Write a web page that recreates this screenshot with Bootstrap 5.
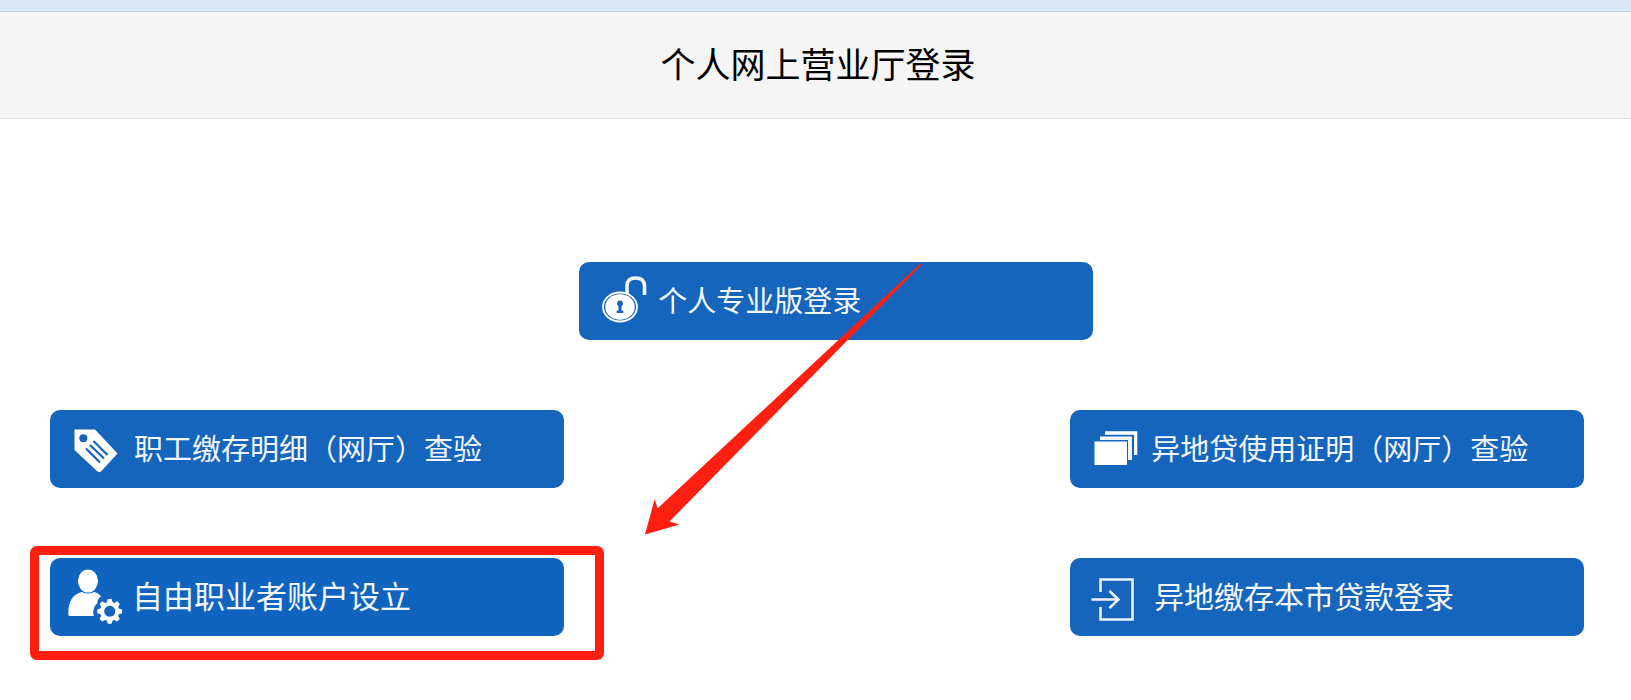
<!DOCTYPE html>
<html lang="zh-CN">
<head>
<meta charset="utf-8">
<meta name="viewport" content="width=device-width, initial-scale=1">
<title>个人网上营业厅登录</title>
<link rel="stylesheet" href="https://cdn.jsdelivr.net/npm/bootstrap@5.3.0/dist/css/bootstrap.min.css">
<style>
  body { font-family: "Noto Sans CJK SC", sans-serif; color: #000; background: #fff; }
  .top-strip { height: 12px; background: #dce8f7; border-bottom: 1px solid #c5ccd8; }
  .page-head { padding: 25px 0 29px 5px; background: #f5f5f5; border-bottom: 1px dotted #d5d5d5; }
  .page-head h1 { font-size: 35px; line-height: 52px; font-weight: 400; }
  .entries { padding: 143px 47px 40px 50px; gap: 70px; }
  .entry-slot { width: 33.5%; }
  .entry-slot.main-entry { margin-left: 34.5%; }
  .entry { --bs-btn-color: #f3f7fd; --bs-btn-hover-color: #fff; --bs-btn-bg: #1565bc; --bs-btn-hover-bg: #0f58a8;
    --bs-btn-border-width: 0; --bs-btn-border-radius: 10px; --bs-btn-padding-x: 16px; --bs-btn-padding-y: 10px;
    --bs-btn-font-size: 29px; --bs-btn-line-height: 40px; gap: 8px; white-space: nowrap; }
  .entry svg { height: 58px; flex: none; }
  .entry span { padding-bottom: 4px; }
  .entry.wide-text { --bs-btn-font-size: 30px; }
  .entry.wider-text { --bs-btn-font-size: 31px; --bs-btn-bg: #1064bf; }
  .pointer { left: 66px; top: 1px; z-index: 2; pointer-events: none; }
  .highlight { inset: -12px -40px -24px -20px; border: 9px solid #ff1f10; border-radius: 7px; pointer-events: none; }
</style>
</head>
<body>
<div class="top-strip"></div>
<header class="page-head text-center"><h1 class="m-0">个人网上营业厅登录</h1></header>

<main class="entries d-flex flex-column">
  <div class="entry-slot main-entry position-relative">
    <a href="#" class="btn entry d-flex align-items-center">
      <svg width="55" height="58" viewBox="0 0 55 58" fill="none" aria-hidden="true">
        <path d="M32 23V14Q32 6 40.500 6Q49.500 6 49.500 14V23" stroke="#f3f7fc" stroke-width="3.600"/>
        <ellipse cx="25" cy="35" rx="17" ry="14.500" fill="#1565bc" stroke="#fff" stroke-width="1.800"/>
        <ellipse cx="25" cy="35" rx="14.800" ry="12.700" fill="#fff"/>
        <circle cx="25" cy="31.500" r="2.900" fill="#1565bc"/>
        <path d="M23.500 33h3v5.500h1.800v2.500h-6.600v-2.500h1.800z" fill="#1565bc"/>
      </svg>
      <span>个人专业版登录</span>
    </a>
    <svg class="pointer position-absolute" width="278" height="272" viewBox="0 0 278 272" aria-hidden="true">
      <path d="M0 271.500 9.700 236 12.500 245.500 275.500 .5 276.700 1.700 24.500 258.500 34.500 261.500Z" fill="#ff1f10"/>
    </svg>
  </div>

  <div class="d-flex justify-content-between">
    <div class="entry-slot">
      <a href="#" class="btn entry d-flex align-items-center">
        <svg width="60" height="58" viewBox="0 0 60 58" aria-hidden="true">
          <path d="M8.500 9.500H29L51.500 33.500 35 51.500Q33 53 31 51L8.500 30Z" fill="#fff"/>
          <circle cx="17.300" cy="18.300" r="4" fill="#1565bc"/>
          <path d="M27.500 21l14 14M24 25l14 13.500M20 28.500l14 14" stroke="#1565bc" stroke-width="2.200"/>
        </svg>
        <span>职工缴存明细（网厅）查验</span>
      </a>
    </div>
    <div class="entry-slot">
      <a href="#" class="btn entry d-flex align-items-center">
        <svg width="57" height="58" viewBox="0 0 57 58" fill="#fff" aria-hidden="true">
          <path d="M8.500 21.500h32.500v23.500H8.500z"/>
          <path d="M14 16.500h32V40h-4V20H14z" fill="#f0f5fb"/>
          <path d="M19 11.300h32.300V35H48V14.800H19z"/>
        </svg>
        <span>异地贷使用证明（网厅）查验</span>
      </a>
    </div>
  </div>

  <div class="d-flex justify-content-between">
    <div class="entry-slot position-relative">
      <a href="#" class="btn entry wider-text d-flex align-items-center">
        <svg width="58" height="58" viewBox="0 0 58 58" fill="#fff" aria-hidden="true">
          <ellipse cx="22" cy="13" rx="10" ry="11.500"/>
          <path d="M4 48Q2 48 2.300 45Q2.500 27 16 24Q22 27 28 24Q33 25 35 28.500Q31 31 31.500 35Q26 40 27.500 48Z"/>
          <path fill-rule="evenodd" d="M41.800 31h3.800l1 3.200 1.600.7 3-1.600 2.600 2.600-1.600 3 .7 1.600 3.200 1v3.800l-3.200 1-.7 1.600 1.600 3-2.600 2.600-3-1.600-1.600.7-1 3.200h-3.800l-1-3.200-1.600-.7-3 1.600-2.600-2.600 1.600-3-.7-1.600-3.200-1v-3.800l3.200-1 .7-1.600-1.600-3 2.600-2.600 3 1.600 1.600-.7zM43.700 37.800a5.500 5.500 0 1 0 .1 0z"/>
        </svg>
        <span>自由职业者账户设立</span>
      </a>
      <div class="highlight position-absolute"></div>
    </div>
    <div class="entry-slot">
      <a href="#" class="btn entry wide-text d-flex align-items-center">
        <svg width="60" height="58" viewBox="0 0 60 58" fill="none" stroke="#eef3fb" stroke-width="2.500" aria-hidden="true">
          <path d="M14.500 24V11.500h32V51.500h-32V39"/>
          <path d="M5.500 31.500H32M23.500 23l9 8.500-9 8.500"/>
        </svg>
        <span>异地缴存本市贷款登录</span>
      </a>
    </div>
  </div>
</main>
<script src="https://cdn.jsdelivr.net/npm/bootstrap@5.3.0/dist/js/bootstrap.bundle.min.js"></script>
</body>
</html>
